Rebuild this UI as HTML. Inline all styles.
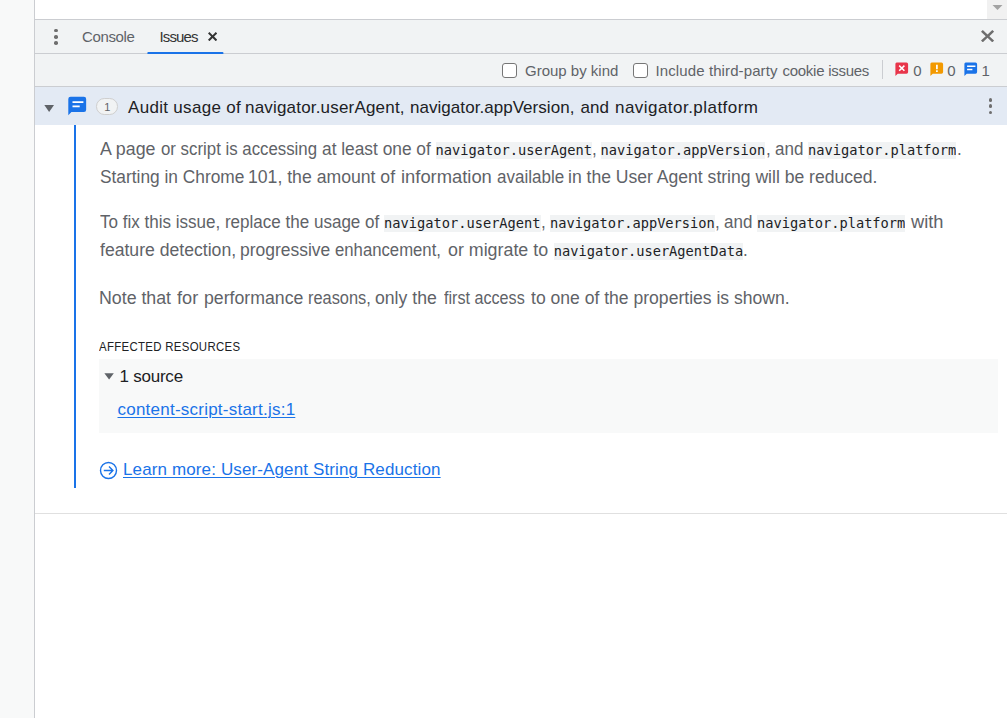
<!DOCTYPE html>
<html lang="en">
<head>
<meta charset="utf-8">
<title>Issues</title>
<style>
html,body{margin:0;padding:0;}
body{width:1007px;height:718px;overflow:hidden;background:#fff;position:relative;
 font-family:"Liberation Sans",sans-serif;color:#202124;}
.abs{position:absolute;}
.t{position:absolute;white-space:nowrap;line-height:1;}
#left{left:0;top:0;width:34px;height:718px;background:#f8f9f9;border-right:1px solid #cbcdd1;box-sizing:content-box;}
#sb{left:987px;top:0;width:20px;height:19px;background:#f1f1f1;}
#tabbar{left:35px;top:19px;width:972px;height:34px;background:#f1f3f4;border-top:1px solid #cbcdd1;border-bottom:1px solid #cbcdd1;box-sizing:border-box;height:35px;}
#toolbar{left:35px;top:54px;width:972px;height:32px;background:#f1f3f4;border-bottom:1px solid #cbcdd1;box-sizing:content-box;}
#hdr{left:35px;top:87px;width:972px;height:38px;background:#e3eaf4;}
#bluebar{left:74px;top:125px;width:2px;height:363px;background:#1a73e8;}
#resbox{left:99px;top:359px;width:899px;height:74px;background:#f8f9f9;}
#divider{left:35px;top:513px;width:972px;height:1px;background:#e0e0e0;}
.tab{font-size:15px;color:#5f6368;}
.body{font-size:17px;color:#5f6368;}
.code{font-family:"DejaVu Sans Mono","Liberation Mono",monospace;font-size:13.7px;color:#202124;background:#f1f3f4;position:absolute;white-space:nowrap;line-height:17.3px;height:17.5px;overflow:hidden;}
.link{color:#1a73e8;text-decoration:underline;text-decoration-thickness:1px;text-underline-offset:2px;}
.cb{position:absolute;width:13px;height:13px;border:1px solid #767676;border-radius:3px;background:#fff;}
.dot{position:absolute;width:3.6px;height:3.6px;margin:0.2px;border-radius:50%;background:#6e6e6e;}
</style>
</head>
<body>
<div id="left" class="abs"></div>
<div id="sb" class="abs"><svg width="20" height="19" style="position:absolute;left:0;top:0"><path d="M5.5 5 L15.5 5 L10.5 10 Z" fill="#a3a3a3"/></svg></div>

<div id="tabbar" class="abs"></div>
<div id="toolbar" class="abs"></div>
<svg id="underline" class="abs" style="left:147px;top:51px" width="78" height="4"><path d="M0.4 3 V1.8 Q0.4 0.9 1.3 0.9 H75.5 Q76.4 0.9 76.4 1.8 V3 Z" fill="#1a73e8"/></svg>

<!-- tab bar contents -->
<div class="dot" style="left:54px;top:28.5px"></div>
<div class="dot" style="left:54px;top:34.75px"></div>
<div class="dot" style="left:54px;top:41px"></div>
<div class="t tab" id="tConsole" style="left:82px;top:29.3px;letter-spacing:-0.36px;font-size:15px;">Console</div>
<div class="t tab" id="tIssues" style="left:159.48px;top:29.3px;color:#333;letter-spacing:-0.88px;font-size:15px;">Issues</div>
<svg class="abs" style="left:207.8px;top:31.9px" width="9.2" height="9.2" viewBox="0 0 9.2 9.2"><path d="M9.20 1.45 L7.75 0.00 L4.60 3.15 L1.45 0.00 L0.00 1.45 L3.15 4.60 L0.00 7.75 L1.45 9.20 L4.60 6.05 L7.75 9.20 L9.20 7.75 L6.05 4.60 Z" fill="#333"/></svg>
<svg class="abs" style="left:980.95px;top:29.8px" width="13.1" height="12.3" preserveAspectRatio="none" viewBox="0 0 12.6 12.6"><path d="M12.60 1.75 L10.85 0.00 L6.30 4.55 L1.75 0.00 L0.00 1.75 L4.55 6.30 L0.00 10.85 L1.75 12.60 L6.30 8.05 L10.85 12.60 L12.60 10.85 L8.05 6.30 Z" fill="#6e6e6e"/></svg>

<!-- toolbar contents -->
<div class="cb" style="left:502px;top:63px"></div>
<div class="t tab" id="tGroup" style="left:525px;top:63px;">Group by kind</div>
<div class="cb" style="left:633px;top:63px"></div>
<div class="t tab" id="tInc1" style="left:655.5px;top:63px;letter-spacing:0.105px;">Include third-party</div>
<div class="t tab" id="tInc2" style="left:782.5px;top:63px;letter-spacing:-0.270px;">cookie issues</div>
<div class="abs" style="left:882px;top:60px;width:1px;height:19px;background:#cbcdd1"></div>

<svg class="abs" style="left:895.2px;top:62.4px" width="14" height="15" viewBox="0 0 14 15"><path d="M1.7 0.6 H11.5 Q13.1 0.6 13.1 2.2 V10.1 Q13.1 11.7 11.5 11.7 H2.7 L0.4 14 V2.1 Q0.4 0.6 1.7 0.6 Z" fill="#e8354a"/><path d="M4.2 3.6 L9.4 8.8 M9.4 3.6 L4.2 8.8" stroke="#fff" stroke-width="1.5"/></svg>
<div class="t tab" id="c0a" style="left:913.2px;top:63px;">0</div>
<svg class="abs" style="left:930.1px;top:62.4px" width="14" height="15" viewBox="0 0 14 15"><path d="M1.7 0.6 H11.5 Q13.1 0.6 13.1 2.2 V10.1 Q13.1 11.7 11.5 11.7 H2.7 L0.4 14 V2.1 Q0.4 0.6 1.7 0.6 Z" fill="#f29900"/><path d="M6.9 2.7 V7.2 M6.9 8.2 V9.9" stroke="#fff" stroke-width="1.7"/></svg>
<div class="t tab" id="c0b" style="left:947.3px;top:63px;">0</div>
<svg class="abs" style="left:963.6px;top:62.4px" width="14" height="15" viewBox="0 0 14 15"><path d="M1.7 0.6 H11.5 Q13.1 0.6 13.1 2.2 V10.1 Q13.1 11.7 11.5 11.7 H2.7 L0.4 14 V2.1 Q0.4 0.6 1.7 0.6 Z" fill="#1a73e8"/><path d="M3.1 4.3 H11.4 M3.1 7.5 H8.4" stroke="#fff" stroke-width="1.4"/></svg>
<div class="t tab" id="c1" style="left:981.5px;top:63px;">1</div>

<!-- issue header -->
<div id="hdr" class="abs"></div>
<svg class="abs" style="left:44px;top:104px" width="11" height="9" viewBox="0 0 11 9"><path d="M0.3 1.1 H10 L5.15 7.9 Z" fill="#5f6368"/></svg>
<svg class="abs" style="left:67.5px;top:96px" width="19" height="20" viewBox="0 0 19 20"><path d="M2.6 0.7 H15.9 Q18.15 0.7 18.15 2.95 V13.85 Q18.15 16.1 15.9 16.1 H3.4 L0.3 19.2 V3 Q0.3 0.7 2.6 0.7 Z" fill="#1a73e8"/><path d="M4.5 6.15 H15.4 M4.5 10.4 H11.7" stroke="#fff" stroke-width="1.9"/></svg>
<div class="abs" style="left:96px;top:98px;width:22.4px;height:16.6px;border:1px solid #cfcfcf;border-radius:8.3px;background:#f1f3f4;box-sizing:border-box"></div>
<div class="t" id="tBadge" style="left:104.3px;top:101.6px;font-size:11px;color:#5f6368;">1</div>
<div class="t" id="tT1" style="left:128px;top:99.1px;font-size:17px;color:#202124;letter-spacing:0.311px;">Audit usage of</div>
<div class="t" id="tT2" style="left:245px;top:99.1px;font-size:17px;color:#202124;letter-spacing:0.190px;">navigator.userAgent,</div>
<div class="t" id="tT3" style="left:410px;top:99.1px;font-size:17px;color:#202124;letter-spacing:0.045px;">navigator.appVersion,</div>
<div class="t" id="tT4" style="left:580.5px;top:99.1px;font-size:17px;color:#202124;letter-spacing:0.000px;">and</div>
<div class="t" id="tT5" style="left:615px;top:99.1px;font-size:17px;color:#202124;letter-spacing:0.463px;">navigator.platform</div>
<div class="dot" style="left:988.5px;top:98px"></div>
<div class="dot" style="left:988.5px;top:104.3px"></div>
<div class="dot" style="left:988.5px;top:110.6px"></div>

<div id="bluebar" class="abs"></div>

<!-- body -->
<div class="t body" id="p1a_1" style="left:99.63px;top:139.51px;letter-spacing:0;font-size:18.3px;transform-origin:0 0;transform:scaleX(0.9740);">A page</div>
<div class="t body" id="p1a_2" style="left:160.63px;top:139.51px;letter-spacing:0;font-size:18.3px;transform-origin:0 0;transform:scaleX(0.9198);">or script is accessing</div>
<div class="t body" id="p1a_3" style="left:322.01px;top:139.51px;letter-spacing:0;font-size:18.3px;transform-origin:0 0;transform:scaleX(0.9475);">at least one of</div>
<div class="code" id="k1" style="left:435.5px;top:141.5px;">navigator.userAgent</div>
<div class="t body" id="p1b" style="left:592px;top:139.51px;letter-spacing:0;font-size:18.3px;transform-origin:0 0;transform:scaleX(0.93);">,</div>
<div class="code" id="k2" style="left:600.5px;top:141.5px;">navigator.appVersion</div>
<div class="t body" id="p1c" style="left:765.7px;top:139.51px;letter-spacing:0;font-size:18.3px;transform-origin:0 0;transform:scaleX(0.93);">,</div>
<div class="t body" id="p1c2" style="left:775.20px;top:139.51px;font-size:18.3px;letter-spacing:0;transform-origin:0 0;transform:scaleX(0.93);">and</div>
<div class="code" id="k3" style="left:808px;top:141.5px;">navigator.platform</div>
<div class="t body" id="p1d" style="left:957.3px;top:139.51px;letter-spacing:0;font-size:18.3px;transform-origin:0 0;transform:scaleX(0.93);">.</div>
<div class="t body" id="p1e_1" style="left:99.63px;top:167.51px;letter-spacing:0;font-size:18.3px;transform-origin:0 0;transform:scaleX(0.9470);">Starting in Chrome</div>
<div class="t body" id="p1e_2" style="left:248.14px;top:167.51px;letter-spacing:0;font-size:18.3px;transform-origin:0 0;transform:scaleX(0.9647);">101, the amount of</div>
<div class="t body" id="p1e_3" style="left:401.00px;top:167.51px;letter-spacing:0;font-size:18.3px;transform-origin:0 0;transform:scaleX(1.0043);">information</div>
<div class="t body" id="p1e_4" style="left:496.82px;top:167.51px;letter-spacing:0;font-size:18.3px;transform-origin:0 0;transform:scaleX(0.9305);">available</div>
<div class="t body" id="p1e_5" style="left:567.78px;top:167.51px;letter-spacing:0;font-size:18.3px;transform-origin:0 0;transform:scaleX(0.9606);">in the User Agent string will be reduced.</div>

<div class="t body" id="p2a" style="left:99.5px;top:212.51px;letter-spacing:0;font-size:18.3px;transform-origin:0 0;transform:scaleX(0.9316);">To fix this issue, replace the usage of</div>
<div class="code" id="k4" style="left:384px;top:214.5px;">navigator.userAgent</div>
<div class="t body" id="p2b" style="left:540.6px;top:212.51px;letter-spacing:0;font-size:18.3px;transform-origin:0 0;transform:scaleX(0.93);">,</div>
<div class="code" id="k5" style="left:550px;top:214.5px;">navigator.appVersion</div>
<div class="t body" id="p2c" style="left:714.9px;top:212.51px;letter-spacing:0;font-size:18.3px;transform-origin:0 0;transform:scaleX(0.93);">,</div>
<div class="t body" id="p2c2" style="left:724.20px;top:212.51px;font-size:18.3px;letter-spacing:0;transform-origin:0 0;transform:scaleX(0.93);">and</div>
<div class="code" id="k6" style="left:757px;top:214.5px;">navigator.platform</div>
<div class="t body" id="p2d" style="left:911.42px;top:212.51px;letter-spacing:0;font-size:18.3px;transform-origin:0 0;transform:scaleX(1.0001);">with</div>
<div class="t body" id="p2e_1" style="left:99.63px;top:240.51px;letter-spacing:0;font-size:18.3px;transform-origin:0 0;transform:scaleX(0.9632);">feature detection,</div>
<div class="t body" id="p2e_2" style="left:240.10px;top:240.51px;letter-spacing:0;font-size:18.3px;transform-origin:0 0;transform:scaleX(0.9549);">progressive</div>
<div class="t body" id="p2e_3" style="left:334.50px;top:240.51px;letter-spacing:0;font-size:18.3px;transform-origin:0 0;transform:scaleX(0.9143);">enhancement,</div>
<div class="t body" id="p2e_4" style="left:447.63px;top:240.51px;letter-spacing:0;font-size:18.3px;transform-origin:0 0;transform:scaleX(0.9751);">or migrate to</div>
<div class="code" id="k7" style="left:553.75px;top:242.5px;">navigator.userAgentData</div>
<div class="t body" id="p2f" style="left:743.2px;top:240.51px;letter-spacing:0;font-size:18.3px;transform-origin:0 0;transform:scaleX(0.93);">.</div>

<div class="t body" id="p3_1" style="left:99.00px;top:289.4px;letter-spacing:0;font-size:18.3px;transform-origin:0 0;transform:scaleX(0.9713);">Note that</div>
<div class="t body" id="p3_2" style="left:176.63px;top:289.4px;letter-spacing:0;font-size:18.3px;transform-origin:0 0;transform:scaleX(0.9934);">for</div>
<div class="t body" id="p3_3" style="left:203.70px;top:289.4px;letter-spacing:0;font-size:18.3px;transform-origin:0 0;transform:scaleX(0.9680);">performance</div>
<div class="t body" id="p3_4" style="left:307.80px;top:289.4px;letter-spacing:0;font-size:18.3px;transform-origin:0 0;transform:scaleX(0.8952);">reasons,</div>
<div class="t body" id="p3_5" style="left:374.98px;top:289.4px;letter-spacing:0;font-size:18.3px;transform-origin:0 0;transform:scaleX(0.9650);">only the</div>
<div class="t body" id="p3_6" style="left:443.70px;top:289.4px;letter-spacing:0;font-size:18.3px;transform-origin:0 0;transform:scaleX(0.8830);">first access</div>
<div class="t body" id="p3_7" style="left:531.39px;top:289.4px;letter-spacing:0;font-size:18.3px;transform-origin:0 0;transform:scaleX(0.9604);">to one of the properties is shown.</div>

<div class="t" id="tAff" style="left:99.2px;top:341px;font-size:12.9px;color:#202124;letter-spacing:0.35px;transform-origin:0 0;transform:scaleX(0.886);">AFFECTED RESOURCES</div>
<div id="resbox" class="abs"></div>
<svg class="abs" style="left:104px;top:373px" width="10" height="7" viewBox="0 0 10 7"><path d="M0.4 0.3 H9.8 L5.1 6.6 Z" fill="#5f6368"/></svg>
<div class="t" id="tSrc" style="left:119.5px;top:367.9px;font-size:17px;color:#202124;letter-spacing:-0.229px;">1 source</div>
<div class="t link" id="tLink" style="left:117.5px;top:401.1px;font-size:17px;letter-spacing:0.235px;">content-script-start.js:1</div>

<svg class="abs" style="left:99.3px;top:460.5px" width="19" height="19" viewBox="0 0 19 19"><circle cx="9.5" cy="9.5" r="8" fill="none" stroke="#1a73e8" stroke-width="1.4"/><path d="M4.8 9.5 H13.6 M10 5.6 L13.9 9.5 L10 13.4" fill="none" stroke="#1a73e8" stroke-width="1.4"/></svg>
<div class="t link" id="tLearn" style="left:123px;top:461px;font-size:17px;letter-spacing:0.125px;">Learn more: User-Agent String Reduction</div>

<div id="divider" class="abs"></div>
</body>
</html>
